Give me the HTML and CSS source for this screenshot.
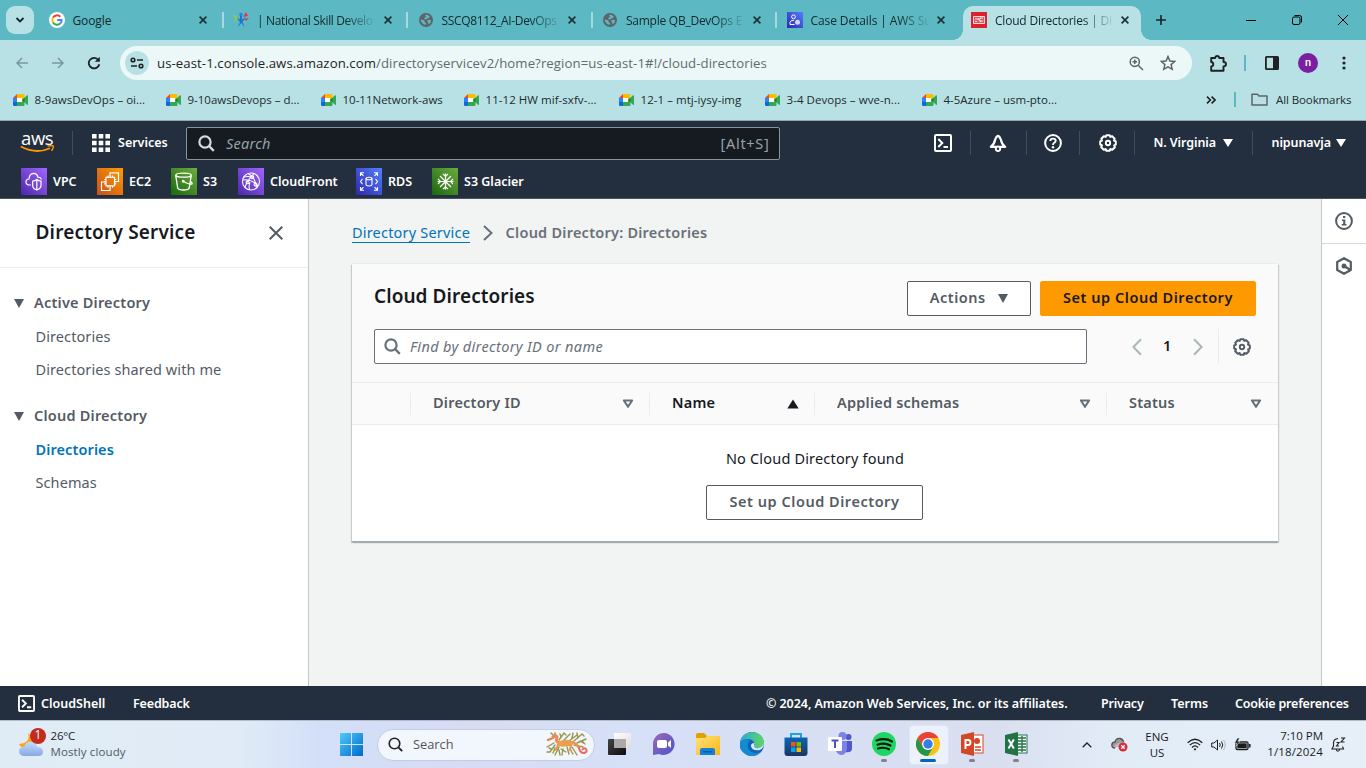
FILE: index.html
```html
<!DOCTYPE html>
<html lang="en">
<head>
<meta charset="utf-8">
<title>Cloud Directories | Directory Service</title>
<link rel="stylesheet" href="styles.css">
</head>
<body>
<svg class="defs" width="0" height="0" aria-hidden="true">
  <defs>
    <linearGradient id="gPurple" x1="0" y1="1" x2="1" y2="0"><stop offset="0" stop-color="#4d27aa"/><stop offset="1" stop-color="#a166ff"/></linearGradient>
    <linearGradient id="gOrange" x1="0" y1="1" x2="1" y2="0"><stop offset="0" stop-color="#c8511b"/><stop offset="1" stop-color="#f90"/></linearGradient>
    <linearGradient id="gGreen" x1="0" y1="1" x2="1" y2="0"><stop offset="0" stop-color="#1b660f"/><stop offset="1" stop-color="#6cae3e"/></linearGradient>
    <linearGradient id="gBlue" x1="0" y1="1" x2="1" y2="0"><stop offset="0" stop-color="#2e27ad"/><stop offset="1" stop-color="#527fff"/></linearGradient>
    <linearGradient id="gWin" x1="0" y1="0" x2="1" y2="1"><stop offset="0" stop-color="#4ccbfb"/><stop offset="1" stop-color="#0069c9"/></linearGradient>
    <linearGradient id="gCloud" x1="0" y1="0" x2="0" y2="1"><stop offset="0" stop-color="#c3dcfc"/><stop offset="1" stop-color="#87a8e4"/></linearGradient>
    <linearGradient id="gDark" x1="0" y1="0" x2="1" y2="1"><stop offset="0" stop-color="#444"/><stop offset="1" stop-color="#0d0d0d"/></linearGradient>
    <linearGradient id="gLight" x1="0" y1="0" x2="1" y2="1"><stop offset="0" stop-color="#fff"/><stop offset="1" stop-color="#ddd"/></linearGradient>
    <linearGradient id="gChat" x1="0" y1="0" x2="1" y2="1"><stop offset="0" stop-color="#9a68b8"/><stop offset="1" stop-color="#4f53c8"/></linearGradient>
    <linearGradient id="gFolder" x1="0" y1="0" x2="1" y2="1"><stop offset="0" stop-color="#ffe17a"/><stop offset="1" stop-color="#fbb814"/></linearGradient>
    <linearGradient id="gEdge" x1="0" y1="0" x2="1" y2="0"><stop offset="0" stop-color="#2ba8e0"/><stop offset="1" stop-color="#5fd85b"/></linearGradient>
    <linearGradient id="gStore" x1="0" y1="0" x2="0" y2="1"><stop offset="0" stop-color="#0b67b5"/><stop offset="1" stop-color="#1b3562"/></linearGradient>
    <symbol id="meet" viewBox="0 0 15 12"><path d="M0 4L4 0V4Z" fill="#ea4335"/><path d="M4 0H10.5Q11.5 0 11.5 1.5V4L9 6V4H4Z" fill="#fbbc04"/><path d="M0 4H4V8H0Z" fill="#2684fc"/><path d="M0 8H4V12H1.2Q0 12 0 10.8Z" fill="#1565d8"/><path d="M4 8H9V6L11.5 8V10.8Q11.5 12 10.4 12H4Z" fill="#34a853"/><path d="M4 4H9V8H4Z" fill="#fff"/><path d="M9 6L14 1.3Q15 .8 15 2V10.3Q15 11.4 14 10.7Z" fill="#34a853"/><path d="M9 6L11.5 3.7V8.2Z" fill="#188038"/></symbol>
    <symbol id="globe" viewBox="0 0 14 14"><circle cx="7" cy="7" r="7" fill="#5f6368"/><path d="M1.7 6.2L4.8 7.3Q6.2 8 5.6 9.3L7.1 10.1V11.8Q2.4 11.6 1.7 6.2ZM5.8 2Q9 1.2 11 3.6Q9.9 3.8 10.2 5.1L8 5.4Q8.2 6.6 6.4 6.5L5 5.6Q5.2 4.5 6.8 4.3V3.1ZM8.5 7.1L11.2 6.8L12.2 7.7Q11.8 10.6 9.2 11.5Q9.8 9.5 8.5 8.8Z" fill="#5cb8c2"/></symbol>
    <symbol id="close" viewBox="0 0 8 8"><path d="M.6.6L7.4 7.4M7.4.6L.6 7.4" stroke="currentColor" stroke-width="1.6" fill="none"/></symbol>
    <symbol id="gear" viewBox="0 0 18 18"><path d="M7.4 1.2H10.6L11.3 2.9L13.1 2.1L15.7 4.7L15 6.6L16.8 7.4V10.6L15.1 11.3L15.9 13.2L13.3 15.8L11.4 15L10.6 16.8H7.4L6.7 15L4.8 15.8L2.2 13.2L3 11.3L1.2 10.6V7.4L3 6.6L2.3 4.7L4.8 2.2L6.7 2.9Z" fill="none" stroke="currentColor" stroke-width="2" stroke-linejoin="round"/><circle cx="9" cy="9" r="2.2" fill="none" stroke="currentColor" stroke-width="1.9"/></symbol>
    <symbol id="terminal" viewBox="0 0 18 18"><rect x="1" y="1" width="16" height="16" rx="1" fill="none" stroke="currentColor" stroke-width="2"/><path d="M4.3 5L8.3 9L4.3 13M9.5 13H14" fill="none" stroke="currentColor" stroke-width="2"/></symbol>
    <symbol id="lens" viewBox="0 0 17 17"><circle cx="7" cy="7" r="5.6" fill="none" stroke="currentColor" stroke-width="2.2"/><path d="M11 11L15.8 15.8" stroke="currentColor" stroke-width="2.4"/></symbol>
    <symbol id="sort" viewBox="0 0 12 10"><path d="M1.9 1.5H10.1L6 7.8Z" fill="none" stroke="currentColor" stroke-width="2.1" stroke-linejoin="round"/></symbol>
  </defs>
</svg>

<div class="screen">
  <header class="browser">
    <div class="tabstrip">
      <div class="tab-search"><svg width="10" height="6" viewBox="0 0 10 6"><path d="M1.5 1L5 4.4L8.5 1" fill="none" stroke="#14282b" stroke-width="1.8"/></svg></div>
      <div class="tab"><svg class="fav" viewBox="0 0 16 16"><circle cx="8" cy="8" r="8" fill="#fff"/><g fill="none" stroke-width="2"><path d="M11.3 4.7A4.7 4.7 0 0 0 4 5.6" stroke="#ea4335"/><path d="M4 5.6A4.7 4.7 0 0 0 4 10.4" stroke="#fbbc05"/><path d="M4 10.4A4.7 4.7 0 0 0 11.2 11.5" stroke="#34a853"/><path d="M11.2 11.5Q12.9 10 12.6 8H8.2" stroke="#4285f4"/></g></svg><span class="tab-title t1">Google</span><svg class="x"><use href="#close"/></svg></div>
      <div class="tab"><svg class="fav" viewBox="0 0 16 16"><path d="M5 15L7 10L3 5L7 7.5V4H9V7.5L13 5L9.5 10L11.5 15L8.2 11Z" fill="#1976d2"/><circle cx="8" cy="2.5" r="1.8" fill="#1e88e5"/><path d="M0 3L5 5L3 7ZM1 8L5 6L3 9Z" fill="#a4c639"/><path d="M10 5L13 0L15 4ZM11 7L16 6L13 9Z" fill="#e53945"/></svg><span class="tab-title t2">| National Skill Develo</span><svg class="x"><use href="#close"/></svg></div>
      <div class="tab"><svg class="fav"><use href="#globe" x="1" y="1" width="14" height="14"/></svg><span class="tab-title t3">SSCQ8112_AI-DevOps</span><svg class="x"><use href="#close"/></svg></div>
      <div class="tab"><svg class="fav"><use href="#globe" x="1" y="1" width="14" height="14"/></svg><span class="tab-title t4">Sample QB_DevOps E</span><svg class="x"><use href="#close"/></svg></div>
      <div class="tab"><svg class="fav" viewBox="0 0 16 16"><rect width="16" height="16" fill="url(#gBlue)"/><g fill="none" stroke="#fff"><circle cx="6.5" cy="4.8" r="1.9"/><path d="M7.5 12.5H3V10.5Q3.5 8 7 8.2"/></g><circle cx="10.5" cy="10.3" r="2.5" fill="#cfd6ff"/></svg><span class="tab-title t5">Case Details | AWS Su</span><svg class="x"><use href="#close"/></svg></div>
      <div class="tab active"><svg class="fav" viewBox="0 0 16 16"><rect width="16" height="16" fill="#d9232e"/><rect x="2.5" y="4" width="11" height="8" fill="#e7555e"/><g fill="none" stroke="#fff" stroke-width=".8"><path d="M2.5 4.5H13.5V11.5H2.5ZM4 7H7M4 9.5H6M9 6H12M8 9H12M7 6L10 10M10 6L7 8"/></g></svg><span class="tab-title t6">Cloud Directories | Di</span><svg class="x"><use href="#close"/></svg></div>
      <svg class="newtab" viewBox="0 0 10 10"><path d="M5 0V10M0 5H10" stroke="#202124" stroke-width="1.6"/></svg>
      <div class="winctl">
        <svg width="10" height="12"><path d="M0 6.5H10" stroke="#000"/></svg>
        <svg width="10" height="10" viewBox="0 0 10 10" fill="none" stroke="#000"><rect x=".5" y="2" width="7.5" height="7.5" rx="1.5"/><path d="M2.5 .5H7.5Q9.5 .5 9.5 2.5V7.5"/></svg>
        <svg width="10" height="10"><path d="M0 0L10 10M10 0L0 10" stroke="#000"/></svg>
      </div>
    </div>

    <div class="toolbar">
      <svg class="tb back" viewBox="0 0 12 12"><path d="M12 6H1M6 1L1 6L6 11" fill="none" stroke="#78979b" stroke-width="1.5"/></svg>
      <svg class="tb fwd" viewBox="0 0 12 12"><path d="M0 6H11M6 1L11 6L6 11" fill="none" stroke="#78979b" stroke-width="1.5"/></svg>
      <svg class="tb reload" viewBox="0 0 14 14"><path d="M11.4 4A5.3 5.3 0 1 0 12.3 8.2" fill="none" stroke="#202124" stroke-width="1.8"/><path d="M12.8 .8V5.8H7.8Z" fill="#202124"/></svg>
      <div class="omnibox">
        <span class="siteinfo"><svg width="14" height="12" viewBox="0 0 14 12" fill="none" stroke="#202124" stroke-width="1.6"><circle cx="3" cy="3" r="1.8"/><path d="M7 3H13M1 9H7"/><circle cx="11" cy="9" r="1.8"/></svg></span>
        <span class="url">us-east-1.console.aws.amazon.com<i>/directoryservicev2/home?region=us-east-1#!/cloud-directories</i></span>
        <svg class="zoomi" viewBox="0 0 15 15" fill="none" stroke="#5f6368" stroke-width="1.5"><circle cx="5.8" cy="5.8" r="4.6"/><path d="M9.2 9.2L14 14M5.8 3.5V8.1M3.5 5.8H8.1"/></svg>
        <svg class="star" viewBox="0 0 16 16"><path d="M8 1.5L9.9 6L14.8 6.4L11.1 9.6L12.2 14.3L8 11.8L3.8 14.3L4.9 9.6L1.2 6.4L6.1 6Z" fill="none" stroke="#5f6368" stroke-width="1.5"/></svg>
      </div>
      <svg class="puzzle" viewBox="0 0 17 17"><path d="M1.2 3H5.2Q5.4 1 7.2 1Q9 1 9.2 3H13.5V7Q16 7 16 9.2Q16 11.2 13.5 11.4V15.7H1.2V11.5Q3.3 11.3 3.3 9.3Q3.3 7.2 1.2 7Z" fill="none" stroke="#202124" stroke-width="1.9" stroke-linejoin="round"/></svg>
      <span class="tsep"></span>
      <svg class="panel" viewBox="0 0 14 14"><rect x=".9" y=".9" width="12.2" height="12.2" rx=".6" fill="none" stroke="#202124" stroke-width="1.8"/><path d="M8 1H13V13H8Z" fill="#202124"/></svg>
      <span class="avatar">n</span>
      <svg class="kebab" viewBox="0 0 4 14" fill="#202124"><circle cx="2" cy="2" r="1.6"/><circle cx="2" cy="7" r="1.6"/><circle cx="2" cy="12" r="1.6"/></svg>
    </div>

    <div class="bookmarks">
      <div class="bm b1"><svg><use href="#meet"/></svg><span>8-9awsDevOps – oi...</span></div>
      <div class="bm b2"><svg><use href="#meet"/></svg><span>9-10awsDevops – d...</span></div>
      <div class="bm b3"><svg><use href="#meet"/></svg><span>10-11Network-aws</span></div>
      <div class="bm b4"><svg><use href="#meet"/></svg><span>11-12 HW mif-sxfv-...</span></div>
      <div class="bm b5"><svg><use href="#meet"/></svg><span>12-1 – mtj-iysy-img</span></div>
      <div class="bm b6"><svg><use href="#meet"/></svg><span>3-4 Devops – wve-n...</span></div>
      <div class="bm b7"><svg><use href="#meet"/></svg><span>4-5Azure – usm-pto...</span></div>
      <svg class="more" viewBox="0 0 10 8"><path d="M1 .6L4.4 4L1 7.4M5.6 .6L9 4L5.6 7.4" fill="none" stroke="#202124" stroke-width="1.6"/></svg>
      <span class="bsep"></span>
      <svg class="bfolder" viewBox="0 0 17 13"><path d="M1 1.2H6.5L8 3H16V12H1Z" fill="none" stroke="#5f6368" stroke-width="1.5" stroke-linejoin="round"/></svg>
      <span class="allbm">All Bookmarks</span>
    </div>
  </header>

  <nav class="awsnav">
    <div class="navrow">
      <div class="awslogo"><span>aws</span><svg viewBox="0 0 35 8"><path d="M.8 1.5Q16 9.5 30 3.2" fill="none" stroke="#f90" stroke-width="1.8"/><path d="M27.5 1.1Q33 .1 33.3 1.1Q33.5 3 31.5 5.8" fill="none" stroke="#f90" stroke-width="1.4"/></svg></div>
      <span class="nsep s0"></span>
      <svg class="apps" viewBox="0 0 18 18" fill="#fff"><path d="M0 0h4.6v4.6H0zM6.7 0h4.6v4.6H6.7zM13.4 0H18v4.6h-4.6zM0 6.7h4.6v4.6H0zM6.7 6.7h4.6v4.6H6.7zM13.4 6.7H18v4.6h-4.6zM0 13.4h4.6V18H0zM6.7 13.4h4.6V18H6.7zM13.4 13.4H18V18h-4.6z"/></svg>
      <span class="services">Services</span>
      <div class="navsearch"><svg><use href="#lens"/></svg><em>Search</em><span>[Alt+S]</span></div>
      <div class="navright">
        <span class="cell c1"><svg><use href="#terminal"/></svg></span>
        <span class="cell c2"><svg viewBox="0 0 18 18"><path d="M9 1.8Q10.6 2 12 6Q12.5 10 16.2 12.8H1.8Q5.5 10 6 6Q7.4 2 9 1.8Z" fill="none" stroke="#fff" stroke-width="2.2" stroke-linejoin="round"/><circle cx="9" cy="14.8" r="2.2" fill="#232f3e" stroke="#fff" stroke-width="1.9"/></svg></span>
        <span class="cell c3"><svg viewBox="0 0 18 18"><circle cx="9" cy="9" r="7.9" fill="none" stroke="#fff" stroke-width="2"/><path d="M6.3 7Q6.4 4.6 9 4.6Q11.7 4.6 11.7 6.8Q11.7 8.2 10 9Q9 9.6 9 11" fill="none" stroke="#fff" stroke-width="1.9"/><circle cx="9" cy="13.2" r="1.2" fill="#fff"/></svg></span>
        <span class="cell c4"><svg><use href="#gear"/></svg></span>
        <span class="cell c5"><b>N. Virginia</b><i class="caret"></i></span>
        <span class="cell c6"><b>nipunavja</b><i class="caret"></i></span>
      </div>
    </div>
    <div class="favrow">
      <div class="sv v1"><svg viewBox="0 0 26 27"><rect width="26" height="27" fill="url(#gPurple)"/><g fill="none" stroke="#fff" stroke-width="1.2"><path d="M10 17H8Q4.8 16.6 5 13.5Q5.4 11 8 11Q8.4 5.5 12.5 5.3Q16.3 5.4 17 9.3Q19.8 9 20.3 11.5"/><path d="M15.8 11.5Q17.5 13 20 13.2V18Q19.5 20.8 15.8 22Q12 20.8 11.7 18V13.2Q14 13 15.8 11.5ZM15.8 12V22"/></g></svg><span>VPC</span></div>
      <div class="sv v2"><svg viewBox="0 0 26 27"><rect width="26" height="27" fill="url(#gOrange)"/><g fill="none" stroke="#fff" stroke-width="1.2"><path d="M8 14H4.5V22.5H13V19.5M13 8V4.8H21.5V13.5H19"/><rect x="9" y="9.3" width="8.500" height="8.5"/><path d="M11 7.5V9.3M13.2 7.5V9.3M15.5 7.5V9.3M11 18V19.7M13.2 18V19.7M15.5 18V19.7M7.2 11.5H9M7.2 13.6H9M7.2 15.8H9M17.5 11.5H19.3M17.5 13.6H19.3M17.5 15.8H19.3"/></g></svg><span>EC2</span></div>
      <div class="sv v3"><svg viewBox="0 0 26 27"><rect width="26" height="27" fill="url(#gGreen)"/><g fill="none" stroke="#fff" stroke-width="1.3"><ellipse cx="12.5" cy="7.2" rx="7.8" ry="2"/><path d="M4.7 7.2L6.7 20Q7.5 22 12.5 22Q17.5 22 18.2 20L20.3 7.2M12.5 13.5Q19 17 21 16Q21.8 15 19.2 13.2"/><circle cx="12.2" cy="13.3" r=".8"/></g></svg><span>S3</span></div>
      <div class="sv v4"><svg viewBox="0 0 26 27"><rect width="26" height="27" fill="url(#gPurple)"/><g fill="none" stroke="#fff" stroke-width="1.1"><circle cx="13" cy="13.5" r="8.5"/><path d="M10 5.7Q17 8 18.5 19.8M5 12Q13 10.5 20 18M7 19.5Q9 12 16 5.8M5.5 9Q10 8 14 9M12 14Q10.5 18 11.5 21.5"/><circle cx="14.2" cy="9.2" r="1.5"/><circle cx="9.5" cy="14.3" r="1.5"/><circle cx="17.5" cy="16.5" r="1.5"/></g></svg><span>CloudFront</span></div>
      <div class="sv v5"><svg viewBox="0 0 26 27"><rect width="26" height="27" fill="url(#gBlue)"/><g fill="none" stroke="#fff" stroke-width="1.1"><path d="M4.5 8V4.7H8M4.7 5L7.5 7.8M18 4.7H21.5V8M21.3 5L18.5 7.8M4.5 19V22.3H8M4.7 22L7.5 19.2M18 22.3H21.5V19M21.3 22L18.5 19.2M6.5 10.8L4.5 13.5L6.5 16.2M19.5 10.8L21.5 13.5L19.5 16.2"/><ellipse cx="13" cy="10.5" rx="3" ry="1.2"/><path d="M10 10.5V16.5Q10.2 18 13 18Q15.8 18 16 16.5V10.5"/></g></svg><span>RDS</span></div>
      <div class="sv v6"><svg viewBox="0 0 26 27"><rect width="27" height="27" fill="url(#gGreen)"/><path d="M13.5 5.5V21.5M5.5 13.5H21.5M8 8L19 19M19 8L8 19M11 6L13.5 8.5L16 6M11 21L13.5 18.5L16 21M6 11L8.5 13.5L6 16M21 11L18.5 13.5L21 16" fill="none" stroke="#fff" stroke-width="1.2"/></svg><span>S3 Glacier</span></div>
    </div>
  </nav>

  <main class="main">
    <aside class="side">
      <div class="sidehead"><h2>Directory Service</h2><svg viewBox="0 0 14 14"><path d="M.7.7L13.3 13.3M13.3.7L.7 13.3" stroke="#545b64" stroke-width="2"/></svg></div>
      <div class="group g1"><i class="tri"></i><span>Active Directory</span></div>
      <a class="item i1">Directories</a>
      <a class="item i2">Directories shared with me</a>
      <div class="group g2"><i class="tri"></i><span>Cloud Directory</span></div>
      <a class="item i3 on">Directories</a>
      <a class="item i4">Schemas</a>
    </aside>

    <section class="content">
      <div class="crumbs"><a>Directory Service</a><svg viewBox="0 0 10 16"><path d="M1 1L8.5 8L1 15" fill="none" stroke="#687078" stroke-width="2"/></svg><b>Cloud Directory: Directories</b></div>
      <div class="card">
        <div class="cardhead">
          <div class="titlerow">
            <h1>Cloud Directories</h1>
            <button class="btn actions"><span>Actions</span><i class="tri"></i></button>
            <button class="btn primary"><span>Set up Cloud Directory</span></button>
          </div>
          <div class="filterrow">
            <div class="find"><svg><use href="#lens"/></svg><em>Find by directory ID or name</em></div>
            <svg class="pg prev" viewBox="0 0 10 18"><path d="M9 1.2L1.4 9L9 16.8" fill="none" stroke="#aab7b8" stroke-width="2"/></svg>
            <b class="pageno">1</b>
            <svg class="pg next" viewBox="0 0 10 18"><path d="M1 1.2L8.6 9L1 16.8" fill="none" stroke="#aab7b8" stroke-width="2"/></svg>
            <span class="prefs"><svg><use href="#gear"/></svg></span>
          </div>
        </div>
        <div class="thead">
          <div class="th"></div>
          <div class="th"><span>Directory ID</span><svg><use href="#sort"/></svg></div>
          <div class="th sorted"><span>Name</span><svg viewBox="0 0 12 10"><path d="M6 .5L11.6 9.5H.4Z" fill="#16191f"/></svg></div>
          <div class="th"><span>Applied schemas</span><svg><use href="#sort"/></svg></div>
          <div class="th"><span>Status</span><svg><use href="#sort"/></svg></div>
        </div>
        <div class="empty"><p>No Cloud Directory found</p><button class="btn setup"><span>Set up Cloud Directory</span></button></div>
      </div>
    </section>

    <aside class="rail">
      <div class="railbtn"><svg viewBox="0 0 18 18"><circle cx="9" cy="9" r="7.9" fill="none" stroke="#545b64" stroke-width="2"/><path d="M8 4H10.3V6H8ZM7 7.5H10.3V12H11.5V13.5H6.7V12H8.2V9H7Z" fill="#545b64"/></svg></div>
      <div class="railbtn"><svg viewBox="0 0 18 18"><path d="M9 1.2L15.8 5V13L9 16.8L2.2 13V5Z" fill="none" stroke="#545b64" stroke-width="2.2" stroke-linejoin="round"/><circle cx="9" cy="9" r="2.5" fill="#545b64"/><path d="M9 9L15.5 13" stroke="#545b64" stroke-width="2.2"/></svg></div>
    </aside>
  </main>

  <footer class="foot">
    <svg><use href="#terminal"/></svg><span class="f1">CloudShell</span><span class="f2">Feedback</span>
    <span class="f3">© 2024, Amazon Web Services, Inc. or its affiliates.</span><span class="f4">Privacy</span><span class="f5">Terms</span><span class="f6">Cookie preferences</span>
  </footer>

  <div class="taskbar">
    <div class="weather">
      <svg width="28" height="29" viewBox="0 0 28 29"><path d="M10 5Q13 15 1 16Q3 21 10 19L17 12Z" fill="#f6a623"/><path d="M7 28Q1 28 1 23Q1 19 6 19Q8 13 14 14Q19 15 19 19Q25 19 25 23.5Q25 28 20 28Z" fill="url(#gCloud)"/><circle cx="20" cy="8" r="8" fill="#c42b1c"/></svg><b>1</b>
      <div><span class="w1">26°C</span><span class="w2">Mostly cloudy</span></div>
    </div>
    <svg class="start" viewBox="0 0 23 23"><path d="M0 0H11V11H0ZM12 0H23V11H12ZM0 12H11V23H0ZM12 12H23V23H12Z" fill="url(#gWin)"/></svg>
    <div class="tsearch"><svg class="tlens" viewBox="0 0 15 15"><circle cx="6.5" cy="6.5" r="5.3" fill="none" stroke="#222" stroke-width="1.6"/><path d="M10.4 10.4L14.2 14.2" stroke="#222" stroke-width="1.9"/></svg><span>Search</span>
      <svg class="dragon" viewBox="0 0 44 24" fill="none" stroke-linecap="round"><g stroke="#98964a" stroke-width="1.4"><path d="M9 5L5 1M8 5L9 1M8 11L1 15M9 13L4 20L1 20M13 15L9 23M13 18L14 23M17 17L16 23M21 15L23 22M26 15L31 23M13 8L18 1L20 3M18 8L24 2M15 5L14 2M23 9L31 3M26 6L27 1M28 9L36 2L38 4M32 6L31 1M31 11L40 7M36 9L38 11M28 13L37 15M34 9L39 12M15 17L20 20M24 17L27 22M9 16L7 21M5 17L3 16"/></g><path d="M2 8L7 6" stroke="#e8834f" stroke-width="2.400"/><path d="M7 5Q10 2 11 5Q9 11 14 10.5" stroke="#ee8a54" stroke-width="3"/><path d="M13 10.500Q20 7 27 10.500Q26 14 20 13Q15 15 12 12Z" stroke="#eba04e" fill="#eba04e" stroke-width="2"/><path d="M27 10Q31 12 33 16M12 13L10 18M25 13L24 18" stroke="#ec9150" stroke-width="2"/><path d="M33 16Q34 21 38 21Q42 20 40 17Q38 15.500 36.500 17.500" stroke="#e9685a" stroke-width="1.900"/></svg>
    </div>
    <div class="apps-row">
      <span class="app"><svg viewBox="0 0 24 24"><rect x="6" y="1" width="17" height="15" rx="1" fill="url(#gLight)"/><rect x="0" y="7" width="18" height="16" rx="1" fill="url(#gDark)"/><path d="M6 7H18V16H6Z" fill="#aaa"/></svg></span>
      <span class="app"><svg viewBox="0 0 24 24"><path d="M12 1A11 11 0 1 1 7 22L1 23V12A11 11 0 0 1 12 1Z" fill="url(#gChat)"/><rect x="5" y="8" width="10" height="8" rx="2" fill="#fff"/><path d="M16 10.5L19 8V16L16 13.5Z" fill="#fff"/></svg></span>
      <span class="app"><svg viewBox="0 0 24 24"><path d="M0 3Q0 1 2 1H8L11 4H22Q24 4 24 6V20H0Z" fill="#e0a100"/><path d="M0 6H9L11 4H22Q24 4 24 6V23H0Z" fill="url(#gFolder)"/><path d="M4 23V18Q4 16 6 16H17Q19 16 19 18V23Z" fill="#1681d4"/><path d="M7 19H16V20.5H7Z" fill="#075ea5"/></svg></span>
      <span class="app"><svg viewBox="0 0 24 24"><circle cx="12" cy="12" r="12" fill="#1163b7"/><path d="M0 11Q1 1 12 0Q23 1 24 11Q23 17 16 16Q13 15 14.5 12Q14 8 9 7Q3 7 0 11Z" fill="url(#gEdge)"/><path d="M10 8Q6 12 9 18Q13 23 20 20Q15 26 7 23Q-2 18 0 11Q4 5 10 8Z" fill="#168ad0"/><path d="M14.5 11Q10.5 11 11 14.5Q13 19.5 20 18Q24 16 24 11Q22 17 16 16Q13 15 14.5 11Z" fill="#dfe8f7"/></svg></span>
      <span class="app"><svg viewBox="0 0 24 24"><path d="M7 6V2H17V6" fill="none" stroke="#16a5e8" stroke-width="2"/><path d="M.5 5.5H23.5V21Q23.5 24 20.5 24H3.5Q.5 24 .5 21Z" fill="url(#gStore)"/><path d="M7 10H11.5V14.5H7Z" fill="#f25022"/><path d="M12.5 10H17V14.5H12.5Z" fill="#7fba00"/><path d="M7 15.5H11.5V20H7Z" fill="#00a4ef"/><path d="M12.5 15.5H17V20H12.5Z" fill="#ffb900"/></svg></span>
      <span class="app"><svg viewBox="0 0 24 24"><circle cx="20.5" cy="5" r="3" fill="#5059c9"/><circle cx="14.5" cy="4" r="4" fill="#7b83eb"/><path d="M17 9H24V17Q23 21 18 20Z" fill="#5059c9"/><path d="M8 9H19V17Q18 23 13 23Q8 22 8 17Z" fill="#7b83eb"/><rect x="0" y="5" width="14" height="14" rx="1" fill="#fff"/><path d="M3.5 8.5H10.5M7 8.5V16" stroke="#4b53bc" stroke-width="2"/></svg></span>
      <span class="app run"><svg viewBox="0 0 24 24"><circle cx="12" cy="12" r="12" fill="#1ed760"/><path d="M4.5 8.5Q13 5.5 20 9.5M5.5 12.7Q12.5 10.3 18.5 13.5M6 16.5Q12 14.7 17 17.3" fill="none" stroke="#06190c" stroke-width="2.2" stroke-linecap="round"/></svg></span>
      <span class="app current"><svg viewBox="0 0 24 24"><circle cx="12" cy="12" r="12" fill="#fbc116"/><path d="M1.6 6A12 12 0 0 1 22.4 6H12L7 15Z" fill="#ea4335"/><path d="M1.6 6A12 12 0 0 0 12 24L17.2 15L12 17L6.8 15Z" fill="#229649"/><circle cx="12" cy="12" r="6" fill="#fff"/><circle cx="12" cy="12" r="4.7" fill="#357de8"/></svg></span>
      <span class="app run"><svg viewBox="0 0 24 24"><rect x="13" y="3" width="10" height="18" fill="#fff" stroke="#d24726"/><path d="M15 15H21M15 18H21" stroke="#d24726" stroke-width="1.3"/><circle cx="17" cy="9" r="3" fill="#d24726"/><path d="M1 3L14 0V24L1 21Z" fill="#d24726"/><path d="M5.5 17V8H8Q10.5 8 10.5 10.5Q10.5 13 8 13H5.5" fill="none" stroke="#fff" stroke-width="1.9"/></svg></span>
      <span class="app run"><svg viewBox="0 0 24 24"><rect x="13" y="3" width="10" height="18" fill="#fff" stroke="#217346"/><path d="M14 6H22M14 9H22M14 12H22M14 15H22M14 18H22M18 4V20" stroke="#217346" stroke-width="1.3"/><path d="M1 3L14 0V24L1 21Z" fill="#217346"/><path d="M4.5 7.5L9.8 16.5M9.8 7.5L4.5 16.5" stroke="#fff" stroke-width="2"/></svg></span>
    </div>
    <div class="tray">
      <svg class="up" viewBox="0 0 10 6"><path d="M.7 5.3L5 1L9.3 5.3" fill="none" stroke="#222" stroke-width="1.3"/></svg>
      <svg class="od" viewBox="0 0 17 15"><path d="M4 11Q.8 11 .8 8Q1 5 4 5Q5 1 9 1.5Q12 2 12.5 5" fill="#9a9a9a" stroke="#555" stroke-width="1.3"/><path d="M3 10Q4 6 12 5Q15 6 15 10Z" fill="#bbb"/><circle cx="12" cy="10" r="4.5" fill="#d92b36"/><path d="M10.3 8.3L13.7 11.7M13.7 8.3L10.3 11.7" stroke="#fff" stroke-width="1.3"/></svg>
      <div class="lang"><span>ENG</span><span>US</span></div>
      <svg class="wifi" viewBox="0 0 16 13" fill="none" stroke="#1b1b1b" stroke-width="1.2"><path d="M.7 4.7Q8-2.2 15.3 4.7M2.8 7.2Q8 2 13.2 7.2M5 9.5Q8 6.3 11 9.5"/><circle cx="8" cy="11.3" r="1.1" fill="#1b1b1b" stroke="none"/></svg>
      <svg class="vol" viewBox="0 0 15 12" fill="none" stroke="#1b1b1b"><path d="M.7 4H3L6.5 1V11L3 8H.7Z"/><path d="M8.5 4Q10 6 8.5 8M10.5 2.5Q13 6 10.5 9.5"/><path d="M12.5 1Q16 6 12.5 11" stroke="#aab5bd"/></svg>
      <svg class="batt" viewBox="0 0 17 13"><rect x="2" y="4" width="12" height="7.5" rx="1.5" fill="#1b1b1b" stroke="#1b1b1b" stroke-width="1.4"/><rect x="3" y="5" width="10" height="5.5" fill="none" stroke="#e5eef8" stroke-width=".6"/><path d="M15.8 6V9.5" stroke="#1b1b1b" stroke-width="1.5"/><path d="M3.5 0L.5 5H3L1.8 8.5L6 3.5H3.8L5.5 0Z" fill="#1b1b1b" stroke="#e5eef8" stroke-width=".5"/></svg>
      <div class="clock"><span class="k1">7:10 PM</span><span class="k2">1/18/2024</span></div>
      <svg class="dnd" viewBox="0 0 15 15" fill="none" stroke="#222" stroke-width="1.1"><path d="M7 1.5Q2.5 2 2.5 6V9L1 12H12.5L11.5 9.5M5 12Q5.5 14.2 7 14.2Q8.5 14 8.8 12M5.5 5.5H8L5.5 9H8M10 1H13.5L10 5H13.5"/></svg>
    </div>
  </div>
</div>
</body>
</html>
```
FILE: styles.css
```css
*{box-sizing:border-box}
body{margin:0;font-family:"Noto Sans",sans-serif;color:#16191f;overflow:hidden}
h1,h2,p{margin:0}
svg{display:block;flex:none}
span,b,em{white-space:nowrap}
.defs{position:absolute}
.screen{width:1366px;height:768px;display:flex;flex-direction:column;background:#f2f3f3}

/* browser chrome */
.browser{height:121px;background:#b8e1e5;font-family:"Open Sans",sans-serif;border-bottom:1px solid #8fa9b0}
.tabstrip{height:40px;background:#5cb8c2;display:flex;align-items:center}
.tab-search{width:28px;height:28px;margin:0 6px;border-radius:9px;background:#b8e1e5;display:flex;align-items:center;justify-content:center;flex:none}
.tab{width:184.5px;height:40px;padding-left:8.5px;display:flex;align-items:center;flex:none;position:relative}
.fav{width:16px;height:16px;margin-right:8px}
.tab-title{width:124px;font-size:12px;line-height:18px;padding-top:1px;color:#12292c;letter-spacing:-.15px}
.t1{letter-spacing:-.1px}
.t2,.t3,.t4,.t5,.t6{mask-image:linear-gradient(90deg,#000 88px,transparent 120px)}
.t2{letter-spacing:-.35px}
.t3{letter-spacing:-.35px}
.t4{letter-spacing:-.25px}
.t5{letter-spacing:-.1px}
.t6{letter-spacing:-.2px}
.x{width:8px;height:8px;margin-left:2.5px;color:#1c2f32}
.tab:nth-child(-n+5)::after{content:"";position:absolute;right:1px;top:12px;width:2px;height:16px;background:#a5d9de}
.tab.active{width:178px;height:34px;margin:6px 0 0 .5px;background:#b8e1e5;border-radius:10px 10px 0 0;padding:0 0 6px 8px}
.tab.active .x{margin-left:2px}
.tab.active::before,.tab.active::after{content:"";position:absolute;bottom:0;width:10px;height:10px}
.tab.active::before{left:-10px;background:radial-gradient(circle at 0 0,transparent 9.5px,#b8e1e5 10px)}
.tab.active::after{right:-10px;background:radial-gradient(circle at 100% 0,transparent 9.5px,#b8e1e5 10px)}
.newtab{width:10px;height:10px;margin-left:15px}
.winctl{margin:0 18px 0 auto;display:flex;gap:36px;align-items:center}
.toolbar{height:46px;display:flex;align-items:center}
.tb{width:12px;height:12px}
.back{margin-left:16px}
.fwd{margin-left:24px}
.reload{width:14px;height:14px;margin:0 19px 0 23px}
.omnibox{width:1072px;flex:none;height:34px;border-radius:17px;background:#ecf8f8;display:flex;align-items:center}
.siteinfo{width:24px;height:24px;margin-left:5px;border-radius:12px;background:#b8e1e5;display:flex;align-items:center;justify-content:center}
.url{margin-left:8px;width:614px;font-size:13.2px;letter-spacing:.075px;color:#1f2326}
.url i{font-style:normal;color:#5f6a6e}
.zoomi{width:15px;height:15px;margin-left:357.5px}
.star{width:16px;height:16px;margin-left:16.5px}
.puzzle{width:17px;height:17px;margin-left:18px}
.tsep{width:2px;height:16px;margin-left:17px;background:#5cb8c2}
.panel{width:14px;height:14px;margin-left:19px}
.avatar{width:20px;height:20px;margin-left:19px;border-radius:50%;background:#7b1fa2;color:#fff;font:500 11px/19px Roboto,sans-serif;text-align:center}
.kebab{width:4px;height:14px;margin-left:24px}
.bookmarks{height:28px;display:flex;align-items:center;font-size:11.5px;color:#1d2b2e;padding:0 0 1px 12.5px}
.bm{display:flex;align-items:center;flex:none}
.bm svg{width:15px;height:12px;margin-right:7px}
.b1{width:153px;letter-spacing:.02px}.b2{width:155px}.b3{width:143px}.b4{width:155px;letter-spacing:.05px}.b5{width:146px;letter-spacing:.05px}.b6{width:157px;letter-spacing:.05px}.b7{width:284.5px}
.more{width:10px;height:8px}
.bsep{width:2px;height:15px;margin-left:17.5px;background:#5cb8c2}
.bfolder{width:17px;height:13px;margin-left:15px}
.allbm{margin-left:8.5px;letter-spacing:-.1px}

/* aws navigation */
.awsnav{height:78px;background:#232f3e;border-bottom:1px solid #4a5361;color:#fff;font-weight:600;font-size:12.5px}
.navrow{height:43px;display:flex;align-items:center}
.awslogo{width:35px;height:22px;margin:-1px 0 0 20px}
.awslogo span{display:block;font:500 18.5px/13px "Open Sans",sans-serif;letter-spacing:-.4px;height:14px;padding-left:1px}
.awslogo svg{width:35px;height:8px}
.nsep{width:1px;height:24px;background:#414d5c}
.s0{margin-left:17px}
.apps{width:18px;height:18px;margin-left:19px}
.services{margin-left:8px;width:50px}
.navsearch{width:594px;height:33px;margin:2px 0 0 18px;border:1px solid #879596;border-radius:2px;background:#161a21;display:flex;align-items:center;font-weight:400;font-size:14.5px;letter-spacing:.25px;color:#95a5a6;padding-bottom:1px}
.navsearch svg{width:17px;height:17px;margin:0 10px 0 11px;color:#d5dbdb}
.navsearch em{margin-left:1px}
.navsearch span{margin:0 9.5px 0 auto;letter-spacing:.7px}
.navright{display:flex;margin-left:auto;height:24px}
.cell{height:24px;display:flex;align-items:center;justify-content:center;border-left:1px solid #414d5c}
.cell svg{width:18px;height:18px}
.cell b{font-weight:600}
.c1{width:55px;border:0}.c2{width:56px;padding-right:2px}.c3{width:53px}.c4{width:55px;padding-left:1px}.c5{width:118px}.c6{width:114px}
.c5,.c6{justify-content:flex-start}
.c5 b{margin-left:18.5px;width:63px;letter-spacing:-.1px}.c6 b{margin-left:18.5px;width:58px;letter-spacing:-.1px}
.caret{margin-left:6px;border:5px solid transparent;border-width:8px 5px 0;border-top-color:#fff}
.favrow{display:flex;height:34px;padding:4px 0 0 21px}
.sv{display:flex;align-items:center;height:27px;flex:none}
.sv svg{width:26px;height:27px;margin-right:6px}
.v1{width:76px}.v2{width:74px}.v3{width:67px}.v4{width:118px}.v5{width:76px}

/* console body */
.main{flex:1;display:flex;min-height:0;color:#545b64;font-size:14.5px}
.side{width:309px;background:#fff;border-right:1px solid #c3c9cb}
.sidehead{height:69px;border-bottom:1px solid #eaeded;display:flex;align-items:center;justify-content:space-between;padding:0 25px 0 35.5px}
.sidehead h2{font-size:19px;font-weight:600;letter-spacing:.18px;color:#16191f;margin-top:-2px}
.sidehead svg{width:14px;height:14px}
.tri{width:0;height:0;border:5.5px solid transparent;border-width:9px 5.5px 0;border-top-color:#545b64}
.group{display:flex;align-items:center;height:20px;padding-left:14px;font-weight:600;letter-spacing:.22px}
.group span{margin:-2px 0 0 10px}
.item{display:block;line-height:20px;padding-left:35.5px;letter-spacing:.1px}
.g1{margin-top:25px}.i1{margin-top:13px}.i2{margin-top:13px}.g2{margin-top:27px}.i3{margin-top:13px}.i4{margin-top:13px}
.on{color:#0073bb;font-weight:600}
.content{flex:1;padding:24px 43px 0}
.crumbs{display:flex;align-items:center;height:20px}
.crumbs a{color:#0073bb;border-bottom:1px solid #0073bb;line-height:16px;padding-bottom:2px;margin-top:1px;letter-spacing:.2px}
.crumbs svg{width:10px;height:16px;margin:0 13px 0 12.5px}
.crumbs b{color:#687078;font-weight:600;letter-spacing:.24px;margin-top:-2px}
.card{width:926px;height:278px;margin-top:21px;background:#fff;box-shadow:0 -1px 0 #eaeded,1px 1px 1px 0 rgba(0,28,36,.18),-1px 1px 1px 0 rgba(0,28,36,.18);border-bottom:1px solid #a3acaf}
.cardhead{height:119px;padding:17px 22px 0;background:#fafafa;border-bottom:1px solid #eaeded}
.titlerow{display:flex;height:35px}
.titlerow h1{font-size:19px;line-height:31px;font-weight:600;letter-spacing:.07px;color:#16191f;margin-right:auto}
.btn{height:35px;border:1px solid #545b64;border-radius:2px;background:#fff;color:#545b64;font:600 14.5px/31px "Noto Sans",sans-serif;padding:0 0 2px;display:flex;align-items:center;justify-content:center;letter-spacing:.53px}
.actions{width:124px;gap:12.5px}
.btn .tri{margin-top:1px}
.primary{width:216px;margin-left:9px;background:#f90;border-color:#f90;color:#16191f}
.filterrow{display:flex;align-items:center;height:35px;margin-top:13px}
.find{width:713px;height:35px;border:1px solid #687078;border-radius:2px;background:#fff;display:flex;align-items:center;color:#687078;letter-spacing:.36px}
.find em{margin-top:-2px}
.find svg{width:17px;height:17px;margin:0 9.5px 0 8.5px}
.pg{width:10px;height:18px}
.prev{margin-left:45px}
.pageno{width:50.5px;margin-top:-3px;text-align:center;color:#16191f;font-weight:600}
.prefs{margin-left:15.5px;border-left:1px solid #eaeded;height:35px;padding-left:14px;display:flex;align-items:center}
.prefs svg{width:18px;height:18px}
.thead{height:42px;background:#fafafa;border-bottom:1px solid #eaeded;display:grid;grid-template-columns:59px 239px 165px 292px 171px;align-items:center;font-weight:600;letter-spacing:.22px}
.th{height:22px;border-right:1px solid #eaeded;display:flex;align-items:center;justify-content:space-between;padding:0 15px 0 22px}
.th span{margin-top:-4px}
.th:last-child{border:0;padding-right:16px}
.th svg{width:12px;height:10px;color:#687078}
.sorted{color:#16191f}
.empty{display:flex;flex-direction:column;align-items:center;color:#16191f;padding-top:23px}
.empty p{line-height:20px;letter-spacing:.18px}
.setup{width:217px;margin:17px 1px 0 0}
.rail{width:45px;border-left:1px solid #c3c9cb;background:#fff}
.railbtn{height:45px;border-bottom:1px solid #d5dbdb;display:flex;align-items:center;justify-content:center}
.railbtn + .railbtn{border:0;padding-bottom:2px}
.railbtn svg{width:18px;height:18px}

/* console footer */
.foot{height:34px;background:#232f3e;color:#fff;display:flex;align-items:center;font-weight:600;font-size:12.5px}
.foot svg{width:17px;height:17px;margin:0 6px 0 18px}
.f1{width:92px}.f2{width:633px;letter-spacing:-.15px}.f3{width:335px;letter-spacing:-.06px}.f4{width:70px;letter-spacing:-.2px}.f5{width:64px}.f6{letter-spacing:-.2px}

/* taskbar */
.taskbar{height:48px;border-top:1px solid #b3bcc7;background:linear-gradient(90deg,#e0ecf5 0,#e0ebf7 240px,#d3dff8 320px,#d7dcf5 460px,#d6e0f7 620px,#dadff0 1000px,#e2ecf7 1120px,#e6eff8);display:flex;align-items:center;font-family:"Open Sans",sans-serif;font-size:11.5px;color:#1b1b1b}
.weather{display:flex;align-items:center;padding-left:18px;width:340px;position:relative}
.weather > b{position:absolute;left:30px;top:-2px;width:16px;text-align:center;color:#fff;font-size:12px;line-height:16px;font-weight:400}
.weather > div{margin:-1px 0 0 4.5px}
.weather svg{margin-top:-4px}
.weather span,.lang span,.clock span{display:block;line-height:16px}
.w1{letter-spacing:-.2px}
.w2{color:#505a61;letter-spacing:.12px}
.start{width:23px;height:23px}
.tsearch{width:218px;height:32px;margin-left:14px;flex:none;border:1px solid #c4cee0;border-radius:16px;background:#f2f6fd;display:flex;align-items:center;font-size:12.8px;color:#555}
.tsearch span{margin-top:-2px}
.tlens{width:15px;height:15px;margin:-1px 10px 0 10px}
.dragon{width:44px;height:24px;margin:-2px 4px 0 auto}
.apps-row{display:flex;margin-left:2.5px;flex:none}
.app{width:44px;height:47px;display:flex;align-items:center;justify-content:center;position:relative;padding:0 0 1px 1px}
.app svg{width:24px;height:24px;position:relative}
.run::after,.current::after{content:"";position:absolute;left:19.5px;top:38px;width:6px;height:3px;border-radius:2px;background:#7d828c}
.current::before{content:"";position:absolute;left:3px;top:4px;width:38px;height:38px;border-radius:4px;background:#edf1fb;border:1px solid #dfe6f3}
.current::after{left:14.5px;width:16px;background:#0067c0}
.tray{display:flex;align-items:center;margin:0 20px 0 auto}
.up{width:10px;height:6px}
.od{width:17px;height:15px;margin-left:19px}
.lang{width:30px;margin:0 0 0 14px;text-align:center}
.wifi{width:16px;height:13px;margin-left:15px}
.vol{width:15px;height:12px;margin-left:8px}
.batt{width:17px;height:13px;margin-left:8px}
.clock{width:62px;margin:-1px 0 0 10px;text-align:right}
.k1{letter-spacing:-.05px}
.k2{letter-spacing:.15px}
.dnd{width:15px;height:15px;margin-left:8px}
```
